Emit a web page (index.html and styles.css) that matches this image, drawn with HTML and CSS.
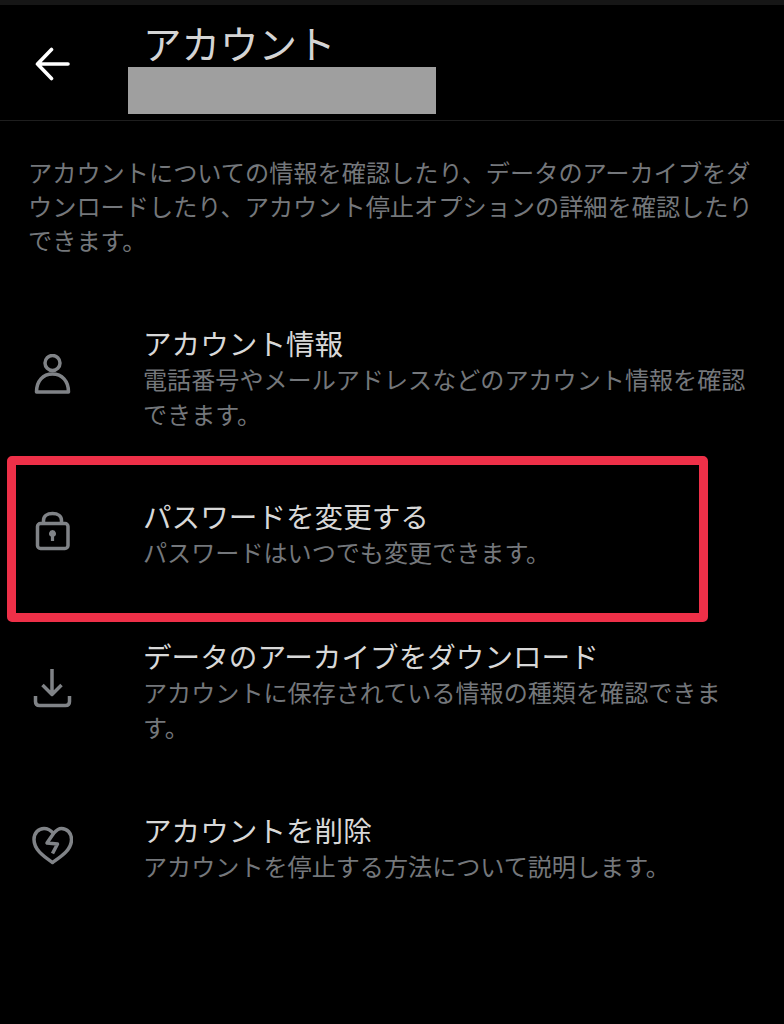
FILE: index.html
```html
<!DOCTYPE html>
<html lang="ja">
<head>
<meta charset="utf-8">
<title>アカウント</title>
<link rel="stylesheet" href="styles.css">
</head>
<body>
<div class="statusbar"></div>
<header class="header">
  <svg class="back" width="36" height="36" viewBox="0 0 36 36" fill="none" stroke="#fff" stroke-width="3.6" stroke-linecap="round" stroke-linejoin="round"><path d="M2.500 18H33M16.500 3.500L2.500 18L16.500 32.500"/></svg>
  <div class="head-text">
    <h1 class="title">アカウント</h1>
    <div class="redact"></div>
  </div>
</header>
<main class="main">
  <p class="intro">アカウントについての情報を確認したり、データのアーカイブをダウンロードしたり、アカウント停止オプションの詳細を確認したりできます。</p>
  <ul class="list">
    <li class="row row-info">
      <svg class="icon" width="41" height="48" viewBox="0 0 41 48" fill="none" stroke="#808387" stroke-width="3.5" stroke-linejoin="round"><circle cx="20.500" cy="9" r="7.500"/><path d="M4.500 38C4.500 27 11 20 20.500 20S36.500 27 36.500 38Z"/></svg>
      <div class="text">
        <div class="name">アカウント情報</div>
        <div class="sub">電話番号やメールアドレスなどのアカウント情報を確認できます。</div>
      </div>
    </li>
    <li class="row row-pass">
      <svg class="icon" width="41" height="48" viewBox="0 -2 41 48" fill="none" stroke="#808387" stroke-width="3.5" stroke-linejoin="round"><path d="M11.500 12V9.500C11.500 5 15 2.500 20.500 2.500S29.500 5 29.500 9.500V12"/><rect x="5.500" y="12.500" width="30.500" height="25" rx="3"/><path d="M20.500 19a3.500 3.500 0 0 1 1.600 6.600V30h-3.200V25.600A3.500 3.500 0 0 1 20.500 19Z" fill="#808387" stroke="none"/></svg>
      <div class="text">
        <div class="name">パスワードを変更する</div>
        <div class="sub">パスワードはいつでも変更できます。</div>
      </div>
    </li>
    <li class="row row-data">
      <svg class="icon" width="41" height="48" viewBox="0 -2 41 48" fill="none" stroke="#808387" stroke-width="3.5" stroke-linejoin="round"><path d="M20 0V26M10.500 16L20 25.500L29.500 16"/><path d="M3.500 27V32.500C3.500 35 5 36.500 7.500 36.500H33.500C36 36.500 37.500 35 37.500 32.500V27"/></svg>
      <div class="text">
        <div class="name">データのアーカイブをダウンロード</div>
        <div class="sub">アカウントに保存されている情報の種類を確認できます。</div>
      </div>
    </li>
    <li class="row row-del">
      <svg class="icon" width="41" height="48" viewBox="0 -2 41 48" fill="none" stroke="#808387" stroke-width="3.5" stroke-linejoin="round"><path d="M20.500 37.500C12 31.500 2 25 2 14.500C2 8 6.500 3.500 12 3.500C16 3.500 19 5.500 21.500 8.500C24 5.500 26.500 3.500 29.500 3.500C35 3.500 39.500 8 39.500 14.500C39.500 25 29 31.500 20.500 37.500Z"/><path d="M21.500 8.500L15 18L25.500 19L20.500 28.500"/></svg>
      <div class="text">
        <div class="name">アカウントを削除</div>
        <div class="sub">アカウントを停止する方法について説明します。</div>
      </div>
    </li>
  </ul>
</main>
<div class="highlight"></div>
</body>
</html>
```
FILE: styles.css
```css
* { box-sizing: border-box; }
html, body { margin: 0; padding: 0; }
body {
  position: relative;
  width: 784px;
  height: 1024px;
  overflow: hidden;
  background: #000;
  color: #e7e9ea;
  font-family: "Noto Sans CJK JP", "Noto Sans", sans-serif;
  font-weight: 400;
}
.statusbar { height: 5px; background: #161616; }
.header {
  display: flex;
  height: 116px;
  border-bottom: 1px solid #1e1e1e;
}
.back { margin: 41px 0 0 35px; flex: none; }
.head-text { margin-left: 72px; }
.title {
  margin: 0;
  font-size: 38.500px;
  font-weight: 400;
  line-height: 46px;
  height: 62px;
  padding-top: 14px;
  color: #d4d4d4;
}
.redact {
  width: 308px;
  height: 47px;
  margin-left: -15px;
  background: #9f9f9f;
}
.intro {
  margin: 0;
  padding: 34px 28px 0 28px;
  font-size: 24.200px;
  line-height: 34px;
  color: #74777b;
}
.list { list-style: none; margin: 67px 0 0 0; padding: 0; }
.row { display: flex; align-items: center; padding-left: 32px; }
.icon { flex: none; }
.text { margin-left: 70px; width: 612px; }
.name { font-size: 28.600px; line-height: 37px; color: #d8d8d8; }
.sub { font-size: 24.100px; line-height: 35px; color: #74777b; }
.row-pass { margin-top: 66px; }
.row-data { margin-top: 68px; }
.row-del { margin-top: 67px; }
.highlight {
  position: absolute;
  left: 7px;
  top: 456px;
  width: 701px;
  height: 166px;
  border: 9.500px solid #ee3048;
  border-radius: 5px;
}
```
